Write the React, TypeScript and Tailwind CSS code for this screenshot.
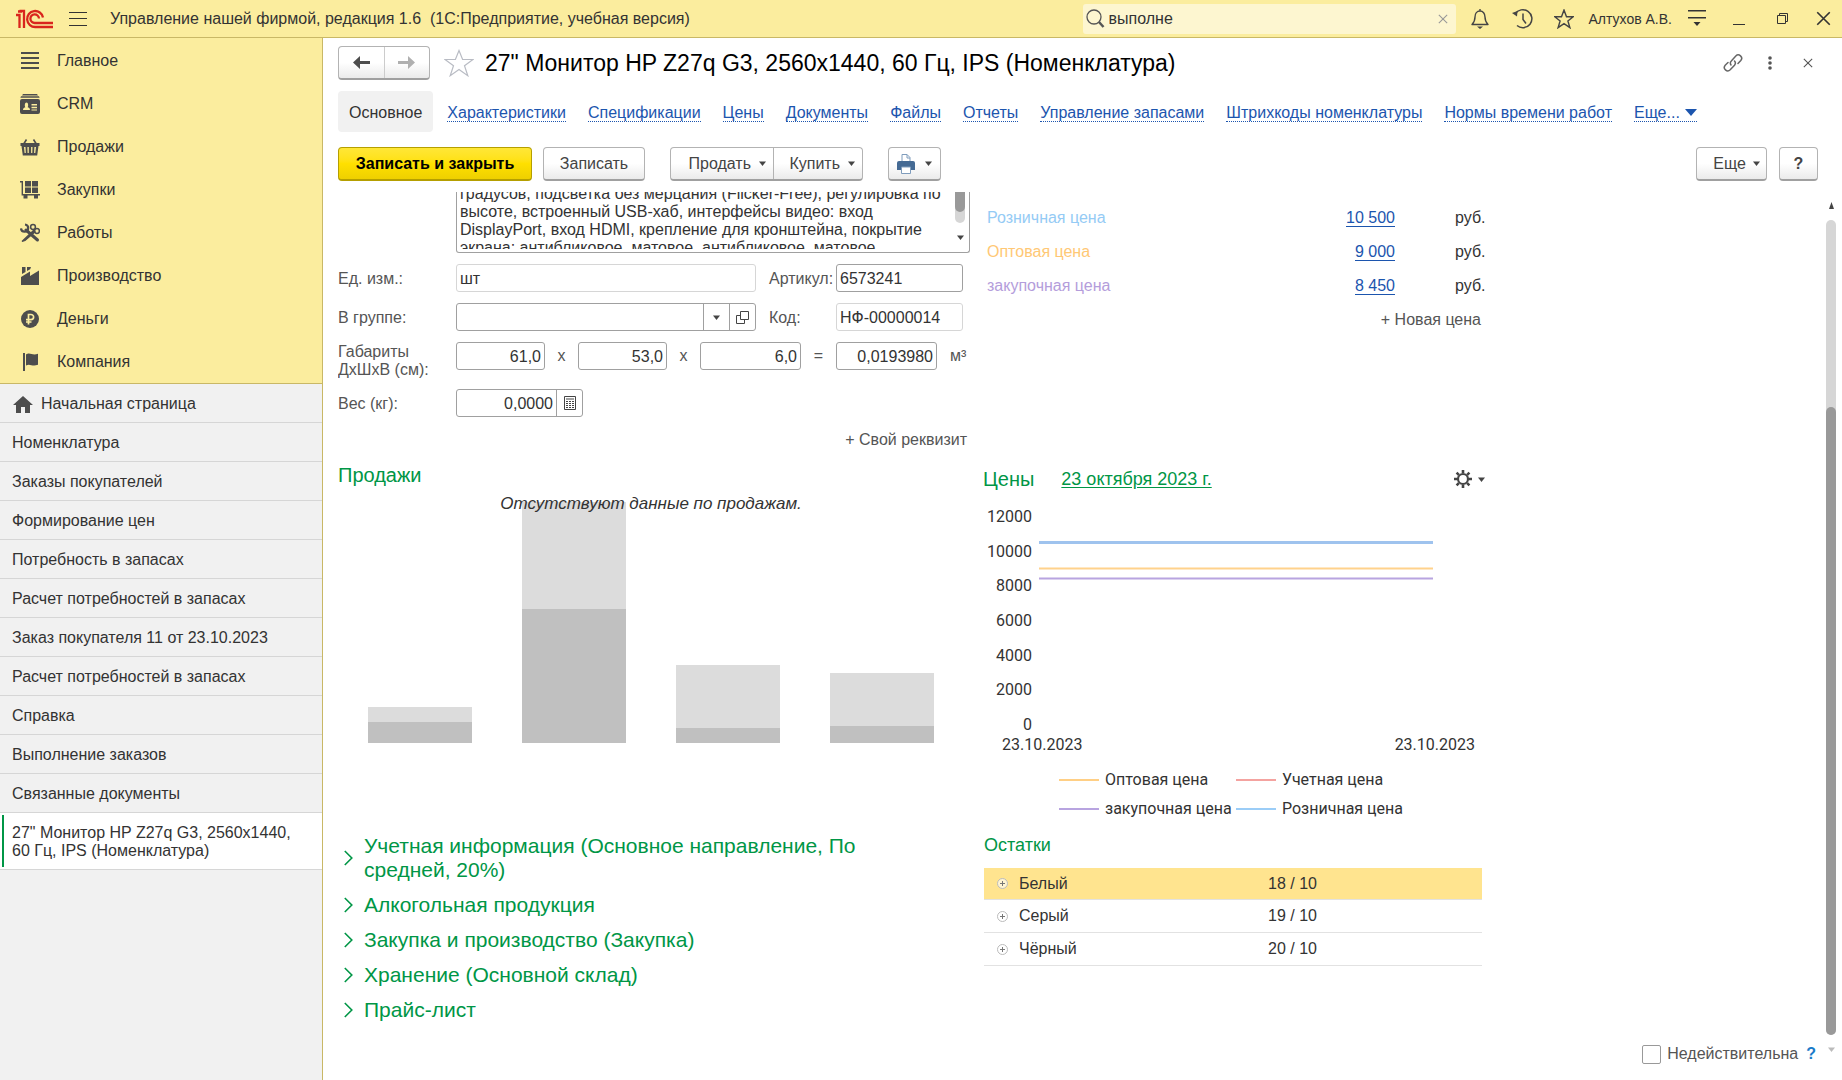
import type { ReactNode } from "react";

const Caret = ({ className = "fill-[#444]" }: { className?: string }) => (
  <svg width="7" height="5" viewBox="0 0 7 5" className={className}>
    <path d="M0 .5h7L3.5 5z" />
  </svg>
);

const Cross = ({ size, className }: { size: number; className: string }) => (
  <svg width={size} height={size} viewBox="0 0 12 12" className={className} fill="none" strokeWidth="1.3">
    <path d="M1 1l10 10M11 1L1 11" />
  </svg>
);

const sections: { label: string; icon: ReactNode }[] = [
  { label: "Главное", icon: <path d="M1 1h18v2H1zM1 6h18v2H1zM1 11h18v2H1zM1 16h18v2H1z" /> },
  {
    label: "CRM",
    icon: (
      <>
        <path d="M3 0h14l1 1.4H2zM1 2.2h18l.6 1.5H.4z" />
        <path
          fillRule="evenodd"
          d="M2 5h16a2 2 0 0 1 2 2v11a2 2 0 0 1-2 2H2a2 2 0 0 1-2-2V7a2 2 0 0 1 2-2zm1 11h7c0-2-1.4-2.3-2.4-2.8C8.500 12 8.400 8.500 6.500 8.500S4.500 12 5.400 13.200C4.400 13.700 3 14 3 16zm8.500-6v1.500H17V10zm0 2.800v1.400H17v-1.400zm0 2.600v1.200H17v-1.200z"
        />
      </>
    ),
  },
  {
    label: "Продажи",
    icon: (
      <>
        <path d="M6.500 2.500L4 6.500M13.500 2.500L16 6.500" className="stroke-[#4d4d4d]" strokeWidth="1.600" fill="none" />
        <path
          fillRule="evenodd"
          d="M.5 6h19v3h-1l-1.300 9.500H2.800L1.500 9h-1zM4 10l.6 6h1.200l-.3-6zm3.400 0l.2 6h1.200v-6zm3.700 0v6h1.200l.2-6zm3.300 0l-.3 6h1.200L16 10z"
        />
      </>
    ),
  },
  {
    label: "Закупки",
    icon: (
      <path d="M0 1h3v13h17v1.600H1.600V2.500H0zM5 1h6v5.500H5zm7 0h6v5.500h-6zM5 7.500h6V13H5zm7 0h6V13h-6zM3.500 15.500h4v3h-4zm10.500 0h4v3h-4z" />
    ),
  },
  {
    label: "Работы",
    icon: (
      <>
        <path d="M13.500 7.500L3 17.500l-1 1 3-1L15 9z" strokeWidth="1.200" className="stroke-[#4d4d4d]" />
        <path d="M6 7l11.500 10" strokeWidth="3" strokeLinecap="round" className="stroke-[#4d4d4d]" />
        <path d="M5 1.500a3.600 3.600 0 1 1-4 4" strokeWidth="2.200" fill="none" className="stroke-[#4d4d4d]" />
        <circle cx="13" cy="4" r="2.400" fill="none" strokeWidth="1.500" className="stroke-[#4d4d4d]" />
        <circle cx="17" cy="8" r="2.400" fill="none" strokeWidth="1.500" className="stroke-[#4d4d4d]" />
      </>
    ),
  },
  {
    label: "Производство",
    icon: <path d="M1 19v-8l9-5.500V10l9-5.500V19zM2 1h3.500v5L2 8zm5 0h4l-.8 2.200L7 5z" />,
  },
  {
    label: "Деньги",
    icon: (
      <>
        <circle cx="10" cy="10" r="9" />
        <path d="M8.500 15.500v-10H11a2.600 2.600 0 0 1 0 5.200H6M6 13h5.500" fill="none" strokeWidth="1.700" className="stroke-[#fbed9e]" />
      </>
    ),
  },
  { label: "Компания", icon: <path d="M3 1h2v18H3zM6 2.500c4-3 6 1.500 12-.8v11c-6 2.300-8-1.700-12 .8z" /> },
];

const openWindows = [
  "Номенклатура",
  "Заказы покупателей",
  "Формирование цен",
  "Потребность в запасах",
  "Расчет потребностей в запасах",
  "Заказ покупателя 11 от 23.10.2023",
  "Расчет потребностей в запасах",
  "Справка",
  "Выполнение заказов",
  "Связанные документы",
];

const tabs = [
  "Характеристики",
  "Спецификации",
  "Цены",
  "Документы",
  "Файлы",
  "Отчеты",
  "Управление запасами",
  "Штрихкоды номенклатуры",
  "Нормы времени работ",
];

const prices = [
  { name: "Розничная цена", value: "10 500", color: "text-[#95cbf5]" },
  { name: "Оптовая цена", value: "9 000", color: "text-[#ffc875]" },
  { name: "закупочная цена", value: "8 450", color: "text-[#b49ddb]" },
];

const bars = [
  { light: 15, dark: 21 },
  { light: 107, dark: 134 },
  { light: 63, dark: 15 },
  { light: 53, dark: 17 },
];

const legend = [
  { name: "Оптовая цена", color: "bg-[#ffcf85]" },
  { name: "Учетная цена", color: "bg-[#f4a3a0]" },
  { name: "закупочная цена", color: "bg-[#b8a4e0]" },
  { name: "Розничная цена", color: "bg-[#9bcdf7]" },
];

const groups = [
  "Учетная информация (Основное направление, По средней, 20%)",
  "Алкогольная продукция",
  "Закупка и производство (Закупка)",
  "Хранение (Основной склад)",
  "Прайс-лист",
];

const stock = [
  { name: "Белый", value: "18 / 10" },
  { name: "Серый", value: "19 / 10" },
  { name: "Чёрный", value: "20 / 10" },
];

const button =
  "flex h-[34px] items-center justify-center rounded border border-[#b3b3b3] border-b-2 border-b-[#a0a0a0] bg-linear-to-b from-white from-50% to-[#ebebeb] text-[#444]";
const box = "h-7 min-w-0 rounded-[3px] border bg-white text-[#333] outline-none";
const field = `${box} border-[#a0a0a0] px-[3px] pt-[2px]`;
const quietField = `${box} border-[#d6d6d6] px-[3px] pt-[2px]`;
const comboField = `${box} flex border-[#a0a0a0]`;
const fieldButton = "flex w-[26px] items-center justify-center border-l border-[#a0a0a0]";

function TopBar() {
  return (
    <header className="flex h-[38px] shrink-0 items-center border-b border-[#c9b866] bg-[#fbed9e] pl-4">
      <svg width="38" height="20" viewBox="0 0 38 20" fill="none" className="stroke-[#d9251d]" strokeWidth="2.300">
        <path d="M0 6h3.500v13M3.500 2H8v17M2 2.500h4" />
        <path d="M27 8.500A8 8 0 1 0 19.500 18H37" />
        <path d="M23 9.500a4.300 4.300 0 1 0-4 4.500H37" />
      </svg>
      <button aria-label="Меню" className="ml-[15px] flex h-[14px] w-[18px] flex-col justify-between">
        <span className="h-px w-full bg-[#333]" />
        <span className="h-px w-full bg-[#333]" />
        <span className="h-px w-full bg-[#333]" />
      </button>
      <div className="ml-[23px] whitespace-pre">Управление нашей фирмой, редакция 1.6  (1С:Предприятие, учебная версия)</div>
      <label className="ml-auto flex h-[30px] w-[373px] items-center rounded-[3px] bg-[#fdf6d0] pr-2 pl-[3px]">
        <svg width="20" height="20" viewBox="0 0 20 20" fill="none" className="stroke-[#555]">
          <circle cx="8" cy="8" r="7" strokeWidth="1.300" />
          <path d="M13 13l4.500 5" strokeWidth="2.500" />
        </svg>
        <input aria-label="Поиск" defaultValue="выполне" className="ml-[3px] min-w-0 flex-1 bg-transparent outline-none" />
        <Cross size={10} className="stroke-[#999]" />
      </label>
      <button aria-label="Уведомления" className="ml-[14px]">
        <svg width="20" height="22" viewBox="0 0 20 22" fill="none" className="stroke-[#444]" strokeWidth="1.400">
          <path d="M10 1v2M2 16.500h16c-2-2-3-3.500-3-7.500 0-3.500-2-6-5-6S5 5.500 5 9c0 4-1 5.500-3 7.500z" strokeLinejoin="round" />
          <path d="M7 18.500h6L10 21z" className="fill-[#444] stroke-none" />
        </svg>
      </button>
      <button aria-label="История" className="ml-[22px]">
        <svg width="21" height="21" viewBox="0 0 21 21" fill="none" className="stroke-[#444]" strokeWidth="1.500">
          <path d="M3.200 6A9 9 0 1 1 5 17.500M11 5.500v6l3 4" />
          <path d="M0 5l5 3.500L5.500 3z" className="fill-[#444] stroke-none" />
        </svg>
      </button>
      <button aria-label="Избранное" className="ml-[21px]">
        <svg width="20" height="20" viewBox="0 0 20 20" fill="none" className="stroke-[#444]" strokeWidth="1.400">
          <path d="M10 1l2.500 6.700h6.700l-5.300 4.200 2 6.800L10 14.700l-5.900 4 2-6.800L.8 7.700h6.700z" />
        </svg>
      </button>
      <span className="ml-[15px] text-sm text-[#333]">Алтухов А.В.</span>
      <button aria-label="Сервис" className="ml-[15px]">
        <svg width="20" height="17" viewBox="0 0 20 17" className="fill-[#333]">
          <path d="M1 0h18v1.500H1zM1 7h18v1.500H1zM6.500 12h7L10 16z" />
        </svg>
      </button>
      <button aria-label="Свернуть" className="ml-[26px] flex h-3 w-3 items-end">
        <span className="h-px w-full bg-[#333]" />
      </button>
      <button aria-label="Развернуть" className="ml-8">
        <svg width="11" height="11" viewBox="0 0 11 11" fill="none" className="stroke-[#333]">
          <path d="M.5 2.500h8v8h-8zM2.500 2.500v-2h8v8h-2" />
        </svg>
      </button>
      <button aria-label="Закрыть" className="mr-[11px] ml-[28px]">
        <Cross size={15} className="stroke-[#333]" />
      </button>
    </header>
  );
}

function Sidebar() {
  return (
    <aside className="flex w-[323px] shrink-0 flex-col border-r border-[#c9b866] bg-[#f1f1f1]">
      <nav className="border-b border-[#c9b866] bg-[#fbed9e] pt-px">
        {sections.map((s) => (
          <a key={s.label} href="#" className="flex h-[43px] items-center pl-5">
            <svg width="20" height="20" viewBox="0 0 20 20" className="fill-[#4d4d4d]">
              {s.icon}
            </svg>
            <span className="ml-[17px]">{s.label}</span>
          </a>
        ))}
      </nav>
      <a href="#" className="flex h-[39px] items-center border-b border-[#d6d6d6] pt-[2px] pl-[13px]">
        <svg width="20" height="17" viewBox="0 0 20 17" className="fill-[#4d4d4d]">
          <path d="M10 0l10 9h-3v8h-5v-6H8v6H3V9H0z" />
        </svg>
        <span className="ml-2">Начальная страница</span>
      </a>
      {openWindows.map((w, i) => (
        <a key={i} href="#" className="flex h-[39px] items-center border-b border-[#d6d6d6] pt-[2px] pl-3">
          {w}
        </a>
      ))}
      <a href="#" className="flex border-b border-[#d6d6d6] bg-white py-[2px] pl-[2px]">
        <span className="w-[2px] bg-[#009646]" />
        <span className="pt-[9px] pb-[7px] pl-2 leading-[18px]">
          27" Монитор HP Z27q G3, 2560x1440,
          <br />
          60 Гц, IPS (Номенклатура)
        </span>
      </a>
    </aside>
  );
}

function TitleRow() {
  return (
    <div className="flex h-8 items-center">
      <div className={`${button} h-8 w-[92px]`}>
        <button aria-label="Назад" className="flex h-full flex-1 items-center justify-center border-r border-[#ccc]">
          <svg width="17" height="13" viewBox="0 0 17 13" className="fill-[#4d4d4d]">
            <path d="M7 0v5h10v3H7v5L0 6.500z" />
          </svg>
        </button>
        <button aria-label="Вперед" className="flex h-full flex-1 items-center justify-center">
          <svg width="17" height="13" viewBox="0 0 17 13" className="fill-[#b0b0b0]">
            <path d="M10 0v5H0v3h10v5l7-6.500z" />
          </svg>
        </button>
      </div>
      <button aria-label="В избранное" className="ml-[14px]">
        <svg width="30" height="28" viewBox="0 0 30 28" fill="none" className="stroke-[#b9bcc4]" strokeWidth="1.200">
          <path d="M15 1.500l3.600 9H29l-8.500 6.300 3.300 9.900L15 20.600l-8.800 6.100 3.300-9.900L1 10.500h10.400z" />
        </svg>
      </button>
      <h1 className="ml-[11px] text-[23px] whitespace-nowrap text-black">27" Монитор HP Z27q G3, 2560x1440, 60 Гц, IPS (Номенклатура)</h1>
      <button aria-label="Получить ссылку" className="ml-auto">
        <svg width="20" height="20" viewBox="0 0 20 20" fill="none" className="stroke-[#666]" strokeWidth="1.500" strokeLinecap="round">
          <path d="M8 12c-1-1.500-.7-3 .3-4l4.500-5a3.400 3.400 0 0 1 5 4.600L15 10.500M11.500 8c1.200 1.300 1 3 0 4.200l-4.300 4.600a3.400 3.400 0 0 1-5-4.600L5 9.500" />
        </svg>
      </button>
      <button aria-label="Действия" className="ml-[25px]">
        <svg width="4" height="14" viewBox="0 0 4 14" className="fill-[#555]">
          <circle cx="2" cy="2" r="1.800" />
          <circle cx="2" cy="7" r="1.800" />
          <circle cx="2" cy="12" r="1.800" />
        </svg>
      </button>
      <button aria-label="Закрыть форму" className="mr-[5px] ml-[31px]">
        <Cross size={10} className="stroke-[#555]" />
      </button>
    </div>
  );
}

function Tabs() {
  return (
    <nav className="mt-3 flex items-center whitespace-nowrap">
      <a href="#" className="mr-[14px] flex h-[41px] items-center rounded bg-[#f1f1f1] px-[11px] pt-[2px]">
        Основное
      </a>
      {tabs.map((t) => (
        <a key={t} href="#" className="mt-[2px] mr-[22px] border-b border-dotted border-[#1c55ae] leading-[17px] text-[#1c55ae]">
          {t}
        </a>
      ))}
      <a href="#" className="mt-[2px] flex items-center gap-[5px] border-b border-dotted border-[#1c55ae] leading-[17px] text-[#1c55ae]">
        Еще...
        <svg width="12" height="7" viewBox="0 0 12 7" className="fill-[#1c55ae]">
          <path d="M0 0h12L6 7z" />
        </svg>
      </a>
    </nav>
  );
}

function Toolbar() {
  return (
    <div className="mt-[15px] flex">
      <button className="h-[34px] w-[194px] rounded border border-b-2 border-[#b59f00] bg-linear-to-b from-[#ffe736] via-[#ffe000] to-[#eed000] font-bold text-black">
        Записать и закрыть
      </button>
      <button className={`${button} ml-[11px] w-[102px]`}>Записать</button>
      <div className={`${button} ml-[25px] w-[193px]`}>
        <button className="flex h-full flex-1 items-center justify-end gap-2 border-r border-[#b3b3b3] pr-[7px]">
          Продать <Caret />
        </button>
        <button className="flex h-full w-[88px] items-center justify-end gap-2 pr-[7px]">
          Купить <Caret />
        </button>
      </div>
      <button aria-label="Печать" className={`${button} ml-[25px] w-[53px] gap-[10px]`}>
        <svg width="18" height="20" viewBox="0 0 18 20">
          <path d="M5 9V.5h5L13 3.500V9z" className="fill-white stroke-[#7f9cbc]" />
          <path d="M10 .5V4h3" fill="none" className="stroke-[#7f9cbc]" />
          <path d="M2 7h14a2 2 0 0 1 2 2v7H0V9a2 2 0 0 1 2-2z" className="fill-[#446a94]" />
          <path d="M4.500 13h9v6.500h-9z" className="fill-white stroke-[#7f9cbc]" />
        </svg>
        <Caret />
      </button>
      <button className={`${button} ml-auto w-[71px] gap-[7px] pl-[10px]`}>
        Еще <Caret />
      </button>
      <button className={`${button} ml-3 w-[39px] font-bold text-[#222]`}>?</button>
    </div>
  );
}

function DetailsForm() {
  return (
    <div>
      <div className="ml-[118px] flex rounded-b-[3px] border border-t-0 border-[#a0a0a0] pb-[3px]">
        <div className="h-[57px] flex-1 overflow-hidden">
          <textarea
            aria-label="Описание"
            readOnly
            className="-mt-[7px] h-16 w-full resize-none overflow-hidden bg-transparent pl-[3px] leading-[18px] whitespace-pre text-[#333] outline-none"
            value={
              "градусов, подсветка без мерцания (Flicker-Free), регулировка по\nвысоте, встроенный USB-хаб, интерфейсы видео: вход\nDisplayPort, вход HDMI, крепление для кронштейна, покрытие\nэкрана: антибликовое, матовое, антибликовое, матовое"
            }
          />
        </div>
        <div className="mr-1 flex w-[10px] flex-col items-center">
          <div className="h-[31px] w-full rounded-b-full bg-[#d6d6d6]">
            <div className="h-5 rounded-b-full bg-[#999]" />
          </div>
          <Caret className="mt-3 fill-[#444]" />
        </div>
      </div>

      <div className="mt-[11px] grid grid-cols-[118px_300px_80px_127px] gap-y-[11px]">
        <label htmlFor="unit" className="self-center pt-[2px]">Ед. изм.:</label>
        <input id="unit" defaultValue="шт" className={quietField} />
        <label htmlFor="article" className="self-center pt-[2px] pl-[13px]">Артикул:</label>
        <input id="article" defaultValue="6573241" className={field} />

        <label htmlFor="group" className="self-center pt-[2px]">В группе:</label>
        <div className={comboField}>
          <input id="group" className="min-w-0 flex-1 px-[3px] outline-none" />
          <button aria-label="Выбрать" className={fieldButton}>
            <Caret />
          </button>
          <button aria-label="Открыть" className={fieldButton}>
            <svg width="13" height="13" viewBox="0 0 13 13" fill="none" className="stroke-[#444]">
              <path d="M4.500.5h8v8h-8zM4.500 4.500h-4v8h8v-4" />
            </svg>
          </button>
        </div>
        <label htmlFor="code" className="self-center pt-[2px] pl-[13px]">Код:</label>
        <input id="code" defaultValue="НФ-00000014" className={quietField} />
      </div>

      <div className="mt-[11px] flex h-9">
        <label htmlFor="length" className="w-[118px] pt-px leading-[18px]">
          Габариты
          <br />
          ДхШхВ (см):
        </label>
        <input id="length" defaultValue="61,0" className={`${field} w-[89px] text-right`} />
        <span className="w-[33px] text-center leading-7">х</span>
        <input aria-label="Ширина" defaultValue="53,0" className={`${field} w-[89px] text-right`} />
        <span className="w-[33px] text-center leading-7">х</span>
        <input aria-label="Высота" defaultValue="6,0" className={`${field} w-[101px] text-right`} />
        <span className="w-[35px] text-center leading-7">=</span>
        <input aria-label="Объем" defaultValue="0,0193980" className={`${field} w-[101px] text-right`} />
        <span className="ml-[13px] leading-7">м³</span>
      </div>

      <div className="mt-[11px] flex">
        <label htmlFor="weight" className="w-[118px] self-center pt-[2px]">Вес (кг):</label>
        <div className={`${comboField} w-[127px]`}>
          <input id="weight" defaultValue="0,0000" className="min-w-0 flex-1 pt-[2px] pr-[3px] text-right outline-none" />
          <button aria-label="Калькулятор" className={fieldButton}>
            <svg width="12" height="14" viewBox="0 0 12 14" fill="none" className="stroke-[#444]">
              <path d="M.5.5h11v13H.5zM2 3h8" />
              <path d="M2 5.500h8M2 7.500h8M2 9.500h8M2 11.500h8" strokeDasharray="2 1" />
            </svg>
          </button>
        </div>
      </div>
      <div className="mt-[11px] flex justify-end pr-[3px]">
        <button>+ Свой реквизит</button>
      </div>
    </div>
  );
}

function Sales() {
  return (
    <section className="mt-[11px]">
      <h2 className="text-xl leading-6 text-[#009646]">Продажи</h2>
      <div className="relative grid h-64 grid-cols-4 items-end gap-[50px] pr-9 pl-[30px]">
        {bars.map((b, i) => (
          <div key={i}>
            <div className="bg-[#dcdcdc]" style={{ height: b.light }} />
            <div className="bg-[#c0c0c0]" style={{ height: b.dark }} />
          </div>
        ))}
        <p className="absolute inset-x-0 top-[5px] pr-[6px] text-center text-[17px] leading-6 text-[#333] italic">
          Отсутствуют данные по продажам.
        </p>
      </div>
    </section>
  );
}

function Groups() {
  return (
    <div className="mt-[91px] flex flex-col gap-[11px] pr-24 pl-[6px] text-[21px] leading-6 text-[#009646]">
      {groups.map((g) => (
        <button key={g} className="flex items-center gap-[11px] text-left">
          <svg width="9" height="16" viewBox="0 0 9 16" fill="none" className="shrink-0 stroke-[#009646]" strokeWidth="1.600">
            <path d="M.8 1l7 7-7 7" />
          </svg>
          {g}
        </button>
      ))}
    </div>
  );
}

function PriceList() {
  return (
    <div className="pt-[9px]">
      <table className="w-full">
        <tbody>
          {prices.map((p) => (
            <tr key={p.name} className="h-[34px]">
              <td className={`pl-1 ${p.color}`}>{p.name}</td>
              <td className="text-right">
                <a href="#" className="border-b border-[#1c55ae] text-[#1c55ae]">{p.value}</a>
              </td>
              <td className="w-[106px] pl-[60px] text-[#333]">руб.</td>
            </tr>
          ))}
        </tbody>
      </table>
      <div className="flex h-[34px] items-center justify-end pr-5">
        <button>+ Новая цена</button>
      </div>
    </div>
  );
}

function PriceChart() {
  return (
    <section className="mt-[130px]">
      <div className="flex h-6 items-center text-[#009646]">
        <h2 className="text-xl">Цены</h2>
        <a href="#" className="ml-[27px] text-lg leading-5 underline underline-offset-2">23 октября 2023 г.</a>
        <button aria-label="Настройки" className="mr-4 ml-auto flex items-center gap-[6px]">
          <svg width="18" height="18" viewBox="0 0 18 18" fill="none" className="stroke-[#444]">
            <circle cx="9" cy="9" r="5" strokeWidth="2.200" />
            <path d="M9 0v3M9 15v3M0 9h3M15 9h3M2.600 2.600l2.200 2.200M13.200 13.200l2.200 2.200M2.600 15.400l2.200-2.200M13.200 4.800l2.200-2.200" strokeWidth="2.600" />
          </svg>
          <Caret />
        </button>
      </div>
      <div className="font-[Roboto,sans-serif] text-[#333]">
        <div className="mt-4 flex h-[228px]">
          <div className="flex w-[49px] flex-col justify-between text-right leading-5">
            {["12000", "10000", "8000", "6000", "4000", "2000", "0"].map((v) => (
              <span key={v}>{v}</span>
            ))}
          </div>
          <svg className="mr-[68px] ml-[7px] h-full min-w-0 flex-1" viewBox="0 0 394 228" preserveAspectRatio="none" fill="none" strokeWidth="2">
            <path d="M0 35.500h394" stroke="#9fc3ee" strokeWidth="3" />
            <path d="M0 61.500h394" stroke="#ffd28c" />
            <path d="M0 71.500h394" stroke="#b8a4e0" />
          </svg>
        </div>
        <div className="flex justify-between pr-[26px] pl-[19px] leading-5">
          <span>23.10.2023</span>
          <span>23.10.2023</span>
        </div>
        <div className="mt-[15px] grid grid-cols-[177px_177px] gap-y-[9px] pl-[76px] leading-5 whitespace-nowrap">
          {legend.map((l) => (
            <div key={l.name} className="flex items-center gap-[6px]">
              <span className={`h-[2px] w-10 shrink-0 ${l.color}`} />
              {l.name}
            </div>
          ))}
        </div>
      </div>
    </section>
  );
}

function Stock() {
  return (
    <section className="mt-[15px] pr-[19px] pl-px">
      <h2 className="text-lg leading-[22px] text-[#009646]">Остатки</h2>
      <table className="mt-3 w-full border-separate border-spacing-0 text-[#333]">
        <tbody>
          {stock.map((s, i) => (
            <tr key={s.name} className={i === 0 ? "h-8 bg-[#ffe48f]" : "h-[33px]"}>
              <td className="w-[284px] border-b border-[#e2e2e2] pl-[13px]">
                <span className="flex items-center gap-[11px]">
                  <button aria-label="Развернуть">
                    <svg width="11" height="11" viewBox="0 0 11 11" fill="none">
                      <circle cx="5.500" cy="5.500" r="5" className="fill-white/60 stroke-[#bbb]" />
                      <path d="M3 5.500h5M5.500 3v5" className="stroke-[#777]" />
                    </svg>
                  </button>
                  {s.name}
                </span>
              </td>
              <td className="border-b border-[#e2e2e2]">{s.value}</td>
            </tr>
          ))}
        </tbody>
      </table>
    </section>
  );
}

function PageScrollbar() {
  return (
    <div className="flex w-[10px] flex-col items-center">
      <svg width="5" height="7" viewBox="0 0 5 7" className="mt-[10px] fill-[#444]">
        <path d="M0 7h5L2.500 0z" />
      </svg>
      <div className="mt-[11px] flex w-full flex-1 flex-col justify-end rounded-full bg-[#d6d6d6]">
        <div className="h-[77%] rounded-full bg-[#999]" />
      </div>
      <Caret className="mt-3 mb-[28px] fill-[#bbb]" />
    </div>
  );
}

export default function App() {
  return (
    <div className="flex h-screen flex-col overflow-hidden bg-white font-['Liberation_Sans',Arial,sans-serif] text-base text-[#333]">
      <TopBar />
      <div className="flex min-h-0 flex-1">
        <Sidebar />
        <main className="flex min-w-0 flex-1 flex-col pt-[9px] pl-[15px]">
          <div className="pr-6">
            <TitleRow />
            <Tabs />
            <Toolbar />
          </div>
          <div className="mt-[11px] flex min-h-0 flex-1 pr-[6px]">
            <div className="flex min-w-0 flex-1 flex-col">
              <div className="grid min-h-0 flex-1 grid-cols-[minmax(0,632px)_minmax(0,518px)] gap-[13px] overflow-hidden text-[#555]">
                <div>
                  <DetailsForm />
                  <Sales />
                  <Groups />
                </div>
                <div>
                  <PriceList />
                  <PriceChart />
                  <Stock />
                </div>
              </div>
              <div className="flex items-center justify-end pr-[10px] pb-[14px] text-[#555]">
                <label className="flex items-center gap-[6px]">
                  <input type="checkbox" className="h-[19px] w-[19px] appearance-none rounded-[2px] border border-[#999] bg-white" />
                  Недействительна
                </label>
                <button className="ml-2 font-bold text-[#1a7bc9]">?</button>
              </div>
            </div>
            <PageScrollbar />
          </div>
        </main>
      </div>
    </div>
  );
}
